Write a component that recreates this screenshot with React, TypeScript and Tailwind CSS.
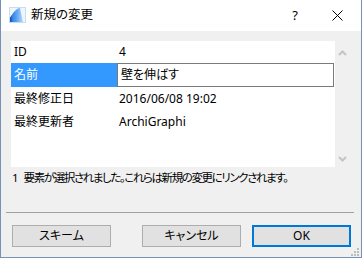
import React from "react";

const font = { fontFamily: '"Noto Sans", "Noto Sans CJK JP", sans-serif', fontFeatureSettings: '"palt"' };

const rows = [
  { label: "ID", value: "4" },
  { label: "名前", value: "壁を伸ばす", edit: true },
  { label: "最終修正日", value: "2016/06/08 19:02" },
  { label: "最終更新者", value: "ArchiGraphi" },
];

const AppIcon = () => (
  <svg width="17" height="16" viewBox="0 0 17 16">
    <defs>
      <linearGradient id="g" x1="0" y1="0" x2="1" y2="0">
        <stop offset="0" stopColor="#1f6fd8" />
        <stop offset="0.5" stopColor="#5aa2f0" />
        <stop offset="1" stopColor="#b9d9fb" />
      </linearGradient>
    </defs>
    <rect x="0.5" y="0.5" width="16" height="15" fill="#eef5fd" stroke="#c9dcf2" />
    <path d="M1 15 L1 11 C3 7 6 3 10 1 L11 1 L14 15 Z" fill="url(#g)" />
    <path d="M1 15 L1 11 L2.5 8.5 L2.5 15 Z" fill="#1557b8" />
  </svg>
);

const Chevron = ({ up }: { up?: boolean }) => (
  <svg width="9" height="6" viewBox="0 0 9 6">
    <path d={up ? "M1 5 L4.5 1.5 L8 5" : "M1 1 L4.5 4.5 L8 1"} stroke="#c4c4c4" strokeWidth="2" fill="none" />
  </svg>
);

export default function App() {
  return (
    <div
      className="flex h-[258px] w-[362px] flex-col border-x border-b border-[#7591b6] text-[12px] text-black"
      style={font}
    >
      <div className="flex h-[31px] items-center bg-white">
        <div className="ml-[8px] mt-[-1px]">
          <AppIcon />
        </div>
        <span className="ml-[5px] text-[12.5px]">新規の変更</span>
        <span className="ml-auto mr-[34px] text-[13px]">?</span>
        <svg className="mr-[18px]" width="11" height="11" viewBox="0 0 11 11">
          <path d="M0.5 0.5 L10.5 10.5 M10.5 0.5 L0.5 10.5" stroke="#000" strokeWidth="1" />
        </svg>
      </div>
      <div className="relative flex flex-1 flex-col bg-[#f0f0f0]">
        <div className="ml-[10px] mt-[10px] flex h-[126px]">
          <div className="flex w-[324px] flex-col bg-white">
            {rows.map((r) => (
              <div
                key={r.label}
                className={`flex items-center ${r.edit ? "h-[24px]" : r.label === "ID" ? "h-[22px]" : "h-[23px]"}`}
              >
                <div
                  className={`flex h-full w-[106px] items-center pl-[3px] ${r.edit ? "bg-[#3399ff] text-white" : ""}`}
                >
                  {r.label}
                </div>
                {r.edit ? (
                  <div className="flex h-full w-[217px] items-center border border-[#7a7a7a] pl-[3px]">
                    {r.value}
                  </div>
                ) : (
                  <div className="pl-[2px]">{r.value}</div>
                )}
              </div>
            ))}
          </div>
          <div className="flex w-[15px] flex-col items-center justify-between pb-[5px] pt-[9px]">
            <Chevron up />
            <Chevron />
          </div>
        </div>
        <div className="ml-[11px] mt-[2px] flex h-[18px] text-[11.5px] leading-[18px] tracking-[-1.4px]">
          <span className="mr-[5px] tracking-normal">1</span>
          <span>要素が選択されました。これらは新規の変更にリンクされます。</span>
        </div>
        <div className="ml-[5px] mt-[25px] h-px w-[348px] bg-[#a0a0a0]" />
        <div className="ml-[11px] mt-[12px] flex">
          <button className="h-[22px] w-[99px] border border-[#adadad] bg-[#e1e1e1]">スキーム</button>
          <button className="ml-[31px] h-[22px] w-[99px] border border-[#adadad] bg-[#e1e1e1]">キャンセル</button>
          <button className="ml-[11px] h-[22px] w-[99px] border-2 border-[#0078d7] bg-[#e1e1e1]">OK</button>
        </div>
        <svg className="absolute bottom-[1px] right-[2px]" width="8" height="8" viewBox="0 0 8 8">
          <rect x="6" y="0" width="2" height="2" fill="#bcbcbc" />
          <rect x="3" y="3" width="2" height="2" fill="#bcbcbc" />
          <rect x="6" y="3" width="2" height="2" fill="#bcbcbc" />
          <rect x="0" y="6" width="2" height="2" fill="#bcbcbc" />
          <rect x="3" y="6" width="2" height="2" fill="#bcbcbc" />
          <rect x="6" y="6" width="2" height="2" fill="#bcbcbc" />
        </svg>
      </div>
    </div>
  );
}
